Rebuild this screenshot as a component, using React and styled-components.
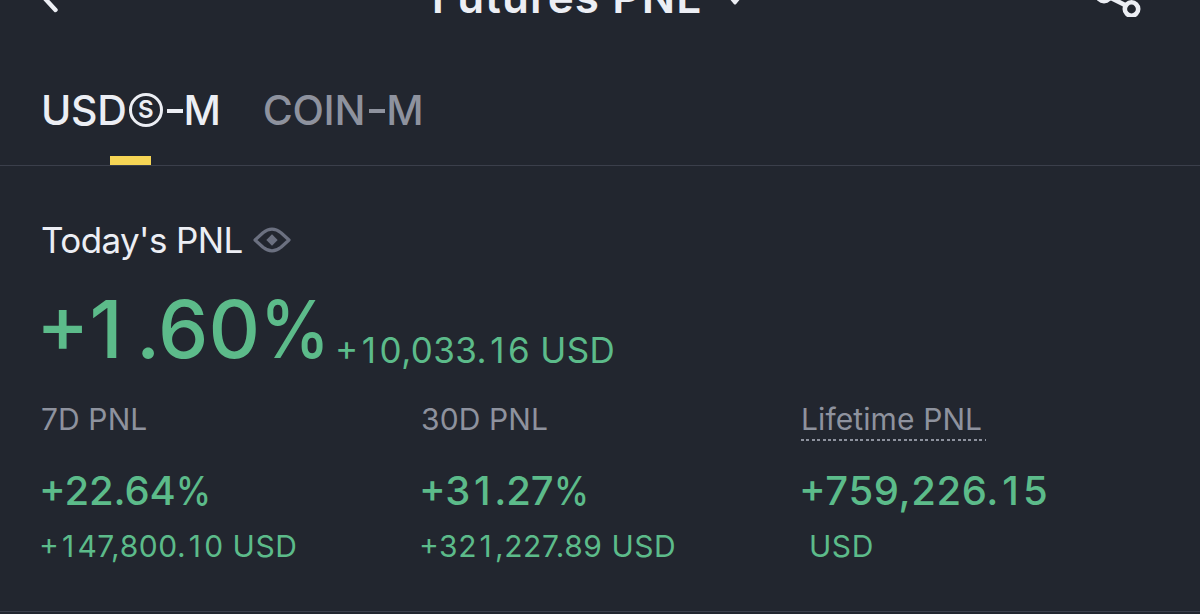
import React, { useState } from "react";
import styled, { createGlobalStyle } from "styled-components";

const tabs = ["usd", "coin"];

const stats = [
  { label: "7D PNL", value: "+22.64", percent: true, amount: "+147,800.10 USD" },
  { label: "30D PNL", value: "+31.27", percent: true, amount: "+321,227.89 USD" },
  { label: "Lifetime PNL", value: "+759,226.15", amount: "USD", hint: true },
];

// gives the narrow "1" the same advance as the other digits
const Figures = ({ children }) =>
  children.split(/(1)/).map((part, i) => (part === "1" ? <One key={i}>1</One> : part));

const App = () => {
  const [active, setActive] = useState("usd");
  return (
    <Page>
      <GlobalStyle />
      <Header>
        <BackIcon viewBox="0 0 24 44">
          <path d="M20.5 41 L3 22 L20.5 3" />
        </BackIcon>
        <Title>
          Futures PNL
          <Caret viewBox="0 0 16 12">
            <path d="M3 3 H13 L8 9 Z" />
          </Caret>
        </Title>
        <ShareIcon viewBox="0 0 48 48">
          <path d="M15 20 L33 11 M15 28 L33 37" />
          <circle cx="10" cy="25.5" r="6.7" />
          <circle cx="37.5" cy="8" r="6.7" />
          <circle cx="37.5" cy="40" r="6.7" />
        </ShareIcon>
      </Header>
      <Tabs>
        {tabs.map((tab) => (
          <Tab key={tab} $active={active === tab} onClick={() => setActive(tab)}>
            {tab === "usd" ? (
              <>
                USD<Coin>S</Coin>
              </>
            ) : (
              "COIN"
            )}
            <Dash />M
          </Tab>
        ))}
      </Tabs>
      <Summary>
        <Today>
          Today's PNL
          <EyeIcon viewBox="0 0 38 26">
            <path d="M2 13 L10 5.7 Q19 -1.5 28 5.7 L36 13 L28 20.3 Q19 27.5 10 20.3 Z" />
            <rect x="15" y="9" width="8" height="8" transform="rotate(45 19 13)" />
          </EyeIcon>
        </Today>
        <Total>
          <Rate>
            <Figures>+1.60</Figures>
            <Percent>%</Percent>
          </Rate>
          <TotalAmount>
            <Figures>+10,033.16 USD</Figures>
          </TotalAmount>
        </Total>
        <Stats>
          {stats.map(({ label, value, percent, amount, hint }) => (
            <Stat key={label}>
              <Label $hint={hint}>{label}</Label>
              <Value $tight={percent}>
                <Figures>{value}</Figures>
                {percent && <Percent>%</Percent>}
              </Value>
              <Amount $indent={hint}>
                <Figures>{amount}</Figures>
              </Amount>
            </Stat>
          ))}
        </Stats>
      </Summary>
    </Page>
  );
};
export default App;

const GlobalStyle = createGlobalStyle`
* {
  box-sizing: border-box;
}
body {
  margin: 0;
  background: #22262f;
}
`;

const Page = styled.div`
width: 1200px;
height: 614px;
overflow: hidden;
background: #22262f;
color: #eceef4;
font-family: Inter, sans-serif;
font-feature-settings: "case";
white-space: nowrap;
`;

const Header = styled.header`
display: flex;
justify-content: space-between;
align-items: center;
height: 72px;
margin-top: -39px;
padding: 0 58px 0 35px;
`;

const BackIcon = styled.svg`
width: 24px;
height: 44px;
margin-top: -12px;
fill: none;
stroke: #eceef4;
stroke-width: 4.4;
stroke-linecap: round;
`;

const Title = styled.div`
display: flex;
align-items: center;
gap: 25px;
margin-left: 22px;
font-size: 44px;
line-height: 72px;
font-weight: 600;
letter-spacing: 1.1px;
`;

const Caret = styled.svg`
width: 16px;
height: 12px;
margin-top: 5px;
fill: #eceef4;
stroke: #eceef4;
stroke-width: 3;
stroke-linejoin: round;
`;

const ShareIcon = styled.svg`
width: 48px;
height: 48px;
margin-top: -9px;
fill: none;
stroke: #eceef4;
stroke-width: 4.6;
`;

const Tabs = styled.nav`
display: flex;
gap: 42px;
height: 133px;
padding-left: 41px;
border-bottom: 1px solid #3b3f4b;
`;

const Tab = styled.div`
display: flex;
align-items: center;
position: relative;
height: 132px;
padding-top: 22px;
font-size: 41px;
line-height: 50px;
font-weight: 500;
letter-spacing: -0.3px;
color: ${({ $active }) => ($active ? "#eceef4" : "#8e929e")};
cursor: pointer;

&::after {
  content: "";
  display: ${({ $active }) => ($active ? "block" : "none")};
  position: absolute;
  bottom: 0;
  left: 50%;
  width: 41px;
  height: 9px;
  margin-left: -21px;
  background: #f6d555;
}
`;

const Coin = styled.span`
display: flex;
justify-content: center;
align-items: center;
width: 34px;
height: 34px;
margin-left: 2px;
border: 3px solid currentColor;
border-radius: 50%;
font-size: 24px;
line-height: 28px;
font-weight: 600;
`;

const Dash = styled.span`
width: 16px;
height: 4px;
margin: 1px 1px 0 4px;
background: currentColor;
`;

const One = styled.span`
display: inline-block;
width: 0.6em;
text-align: center;
`;

const Summary = styled.section`
height: 446px;
padding: 51px 0 0 41px;
border-bottom: 1px solid #3b3f4b;
`;

const Today = styled.div`
display: flex;
align-items: center;
gap: 10px;
height: 46px;
font-size: 35px;
line-height: 44px;
font-weight: 400;
letter-spacing: -0.6px;
`;

const EyeIcon = styled.svg`
width: 38px;
height: 26px;
fill: none;
stroke: #6b7080;
stroke-width: 3.2;
stroke-linejoin: round;

rect {
  fill: #6b7080;
  stroke: none;
}
`;

const Total = styled.div`
display: flex;
align-items: flex-start;
height: 134px;
margin-left: -5px;
color: #5cbb8a;
`;

const Rate = styled.div`
width: 294px;
font-size: 80px;
line-height: 132px;
font-weight: 540;
letter-spacing: 0.1px;

${One} {
  width: 0.58em;
  text-align: left;
}
`;

const TotalAmount = styled.div`
margin-top: 64px;
padding-left: 5px;
font-size: 35px;
line-height: 46px;
font-weight: 400;
letter-spacing: 0.4px;
`;

const Percent = styled.span`
display: inline-block;
margin-right: -0.12em;
transform: scaleX(0.88);
transform-origin: left;
`;

const Stats = styled.div`
display: grid;
grid-template-columns: repeat(3, 380px);
`;

const Stat = styled.div`
display: flex;
flex-direction: column;
align-items: flex-start;
`;

const Label = styled.div`
height: 44px;
font-size: 30px;
line-height: 44px;
font-weight: 400;
letter-spacing: 0.1px;
color: #8e929e;

${({ $hint }) => $hint && `
padding-right: 4px;
background: repeating-linear-gradient(90deg, #8e929e 0 3px, transparent 3px 5.4px) left bottom / 100% 2px no-repeat;
`}
`;

const Value = styled.div`
margin: 26px 0 0 -2px;
font-size: 40px;
line-height: 47px;
font-weight: 540;
letter-spacing: ${({ $tight }) => ($tight ? "-0.1px" : "0.6px")};
color: #5cbb8a;
`;

const Amount = styled.div`
margin: 9px 0 0 -2px;
padding-left: ${({ $indent }) => ($indent ? "10px" : "0")};
font-size: 30px;
line-height: 46px;
font-weight: 400;
letter-spacing: 0.55px;
color: #5cbb8a;
`;
